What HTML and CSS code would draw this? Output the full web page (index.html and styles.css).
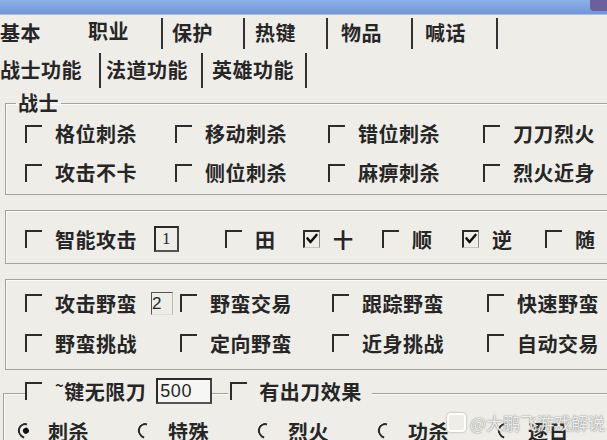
FILE: index.html
```html
<!DOCTYPE html>
<html lang="zh-CN">
<head>
  <meta charset="UTF-8" />
  <title>职业设置</title>
  <link rel="stylesheet" href="styles.css">
</head>
<body>
  <div class="titlebar"><span class="sysbtn"></span></div>

  <div class="tabs">
    <span class="tab w1">基本</span>
    <span class="tab w2 active">职业</span>
    <span class="tab w3">保护</span>
    <span class="tab w4">热键</span>
    <span class="tab w5">物品</span>
    <span class="tab w6">喊话</span>
  </div>

  <div class="subtabs">
    <span class="subtab s1">战士功能</span>
    <span class="subtab s2">法道功能</span>
    <span class="subtab s3">英雄功能</span>
  </div>

  <!-- 战士 -->
  <fieldset class="group g1">
    <legend>战士</legend>
    <div class="grid4">
      <label class="item"><span class="cb"></span>格位刺杀</label>
      <label class="item"><span class="cb"></span>移动刺杀</label>
      <label class="item"><span class="cb"></span>错位刺杀</label>
      <label class="item"><span class="cb"></span>刀刀烈火</label>
      <label class="item"><span class="cb"></span>攻击不卡</label>
      <label class="item"><span class="cb"></span>侧位刺杀</label>
      <label class="item"><span class="cb"></span>麻痹刺杀</label>
      <label class="item"><span class="cb"></span>烈火近身</label>
    </div>
  </fieldset>

  <!-- 智能攻击 -->
  <div class="group g2">
    <div class="row-attack">
      <label class="item"><span class="cb"></span>智能攻击<span class="num">1</span></label>
      <label class="item"><span class="cb"></span>田</label>
      <label class="item"><span class="cb on"><svg viewBox="0 0 14 14"><path d="M2.5 6.5 L5.5 10 L11.5 3" /></svg></span>十</label>
      <label class="item"><span class="cb"></span>顺</label>
      <label class="item"><span class="cb on"><svg viewBox="0 0 14 14"><path d="M2.5 6.5 L5.5 10 L11.5 3" /></svg></span>逆</label>
      <label class="item"><span class="cb"></span>随</label>
    </div>
  </div>

  <!-- 野蛮 -->
  <div class="group g3">
    <div class="grid4 wild">
      <label class="item"><span class="cb"></span>攻击野蛮<span class="num small">2</span></label>
      <label class="item"><span class="cb"></span>野蛮交易</label>
      <label class="item"><span class="cb"></span>跟踪野蛮</label>
      <label class="item"><span class="cb"></span>快速野蛮</label>
      <label class="item"><span class="cb"></span>野蛮挑战</label>
      <label class="item"><span class="cb"></span>定向野蛮</label>
      <label class="item"><span class="cb"></span>近身挑战</label>
      <label class="item"><span class="cb"></span>自动交易</label>
    </div>
  </div>

  <!-- 无限刀 -->
  <div class="group g4">
    <div class="head">
      <label class="item tag"><span class="cb"></span><span class="key"><span class="tilde">~</span>键无限刀</span></label>
      <span class="num wide">500</span>
      <label class="item tag tag2"><span class="cb"></span>有出刀效果</label>
    </div>
    <div class="radios">
      <label class="item"><span class="rb on"></span>刺杀</label>
      <label class="item"><span class="rb"></span>特殊</label>
      <label class="item"><span class="rb"></span>烈火</label>
      <label class="item"><span class="rb"></span>功杀</label>
      <label class="item"><span class="rb"></span>逐日</label>
    </div>
  </div>

  <div class="mark"><span class="mark-icon"></span>@大鹏飞游戏解说</div>
</body>
</html>
```

FILE: styles.css
```css
body {
  margin: 0;
  width: 607px;
  height: 440px;
  overflow: hidden;
  position: relative;
  background-color: #eeede7;
  font-family: "Noto Sans CJK SC", "Noto Sans", sans-serif;
  font-size: 20px;
  font-weight: 700;
  letter-spacing: 0.5px;
  color: #262626;
}

/* window caption strip */
.titlebar {
  height: 14px;
  display: flex;
  justify-content: flex-end;
  background: linear-gradient(#8db0e8, #6e97da);
  border-bottom: 1px solid #a9bddc;
}
.sysbtn {
  width: 17px;
  height: 11px;
  background: #6d5f9c;
  border-radius: 0 0 0 4px;
}

/* main tab strip */
.tabs {
  display: flex;
  height: 35px;
  padding-top: 3px;
}
.tab {
  line-height: 29px;
  height: 31px;
  border-right: 2px solid #333;
  box-sizing: border-box;
}
.tab.active { line-height: 25px; }
.w1 { width: 75px; padding-left: 0; border-right: none; }
.w2 { width: 88px; padding-left: 13px; }
.w3 { width: 82px; padding-left: 9px; }
.w4 { width: 83px; padding-left: 10px; }
.w5 { width: 85px; padding-left: 13px; }
.w6 { width: 85px; padding-left: 12px; }

.subtabs {
  display: flex;
  height: 35px;
}
.subtab {
  line-height: 34px;
  border-right: 2px solid #333;
  box-sizing: border-box;
}
.s1 { width: 101px; }
.s2 { width: 102px; padding-left: 5px; }
.s3 { width: 104px; padding-left: 9px; }

/* group boxes */
.group {
  width: 700px;
  margin: 0 0 0 5px;
  padding: 0;
  border: 1px solid #a3a29b;
  box-shadow: inset 1px 1px 0 #fbfbf8;
}
.g1 { margin-top: 4px; padding-bottom: 2px; }
.g1 legend {
  margin-left: 10px;
  padding: 0 2px;
  line-height: 22px;
}
.g2 { margin-top: 15px; padding: 9px 0 5px; }
.g3 { margin-top: 15px; padding: 3px 0 6px; }
.g4 { margin-top: 23px; margin-left: 3px; border-bottom: none; height: 60px; }

.grid4 {
  display: grid;
  grid-template-columns: 150px 153px 155px 150px;
  padding-left: 19px;
}
.grid4 .item { height: 39px; }
.wild { grid-template-columns: 155px 152px 155px 150px; }
.wild .item { height: 40px; }

.item {
  display: flex;
  align-items: center;
  gap: 13px;
  white-space: nowrap;
}

/* classic sunken checkbox: only the dark edge shows */
.cb {
  flex: none;
  width: 15px;
  height: 16px;
  border-top: 2px solid #2c2c2c;
  border-left: 2px solid #2c2c2c;
}
.cb.on {
  width: 14px;
  height: 15px;
  border-right: 1px solid #8c8c88;
  border-bottom: 1px solid #c8c8c2;
}
.cb svg { display: block; width: 14px; height: 14px; }
.cb path {
  fill: none;
  stroke: #111;
  stroke-width: 2.6;
  stroke-linecap: round;
  stroke-linejoin: round;
}

.num {
  margin-left: 4px;
  width: 21px;
  height: 22px;
  border: 2px solid #2a2a2a;
  border-right-color: #444;
  border-bottom-color: #555;
  font-family: "Liberation Serif", serif;
  font-size: 17px;
  font-weight: 400;
  line-height: 22px;
  text-align: center;
}
.num.small {
  width: 20px;
  height: 21px;
  margin-left: 1px;
  border: 1px solid #555;
  border-right-color: #bbb;
  border-bottom-color: #ddd;
  font-family: "Liberation Sans", sans-serif;
  text-align: left;
}

.row-attack {
  display: grid;
  grid-template-columns: 200px 78px 79px 80px 83px 80px;
  padding-left: 19px;
}
.row-attack .item { height: 38px; }

/* header of the last group sits on its top border */
.head {
  display: flex;
  align-items: center;
  height: 28px;
  margin-top: -17px;
  padding-left: 21px;
}
.tag {
  background-color: #eeede7;
  padding-right: 10px;
}
.key { display: flex; align-items: flex-start; }
.tilde {
  font-size: 15px;
  line-height: 16px;
  margin-right: 0;
}
.num.wide {
  width: 50px;
  height: 22px;
  margin-left: 0;
  background-color: #f6f6f2;
  font-family: "Liberation Sans", sans-serif;
  font-size: 18px;
  text-align: left;
  padding-left: 2px;
}
.tag2 {
  margin-left: 16px;
  padding-left: 2px;
  gap: 12px;
}

.radios {
  display: grid;
  grid-template-columns: repeat(5, 120px);
  padding-left: 14px;
  margin-top: 11px;
}
.radios .item { height: 30px; gap: 15px; }
.rb {
  flex: none;
  position: relative;
  width: 11px;
  height: 12px;
  border: 2px solid transparent;
  border-left-color: #2a2a2a;
  border-top-color: #2a2a2a;
  border-radius: 50%;
  transform: rotate(-30deg);
}
.rb.on::after {
  content: "";
  position: absolute;
  left: 3px;
  top: 3px;
  width: 6px;
  height: 6px;
  border-radius: 50%;
  background: #111;
}

/* watermark over the bottom corner */
.mark {
  position: absolute;
  left: 447px;
  top: 410px;
  display: flex;
  align-items: center;
  gap: 4px;
  font-size: 17px;
  font-weight: 400;
  letter-spacing: 0;
  color: rgba(255, 255, 255, 0.85);
  text-shadow: 0 0 1px #8a8a8a, 0 0 2px #9a9a9a;
}
.mark-icon {
  width: 15px;
  height: 15px;
  border-radius: 4px;
  border: 2px solid rgba(255, 255, 255, 0.85);
  box-shadow: 0 0 2px #8a8a8a;
}
```
